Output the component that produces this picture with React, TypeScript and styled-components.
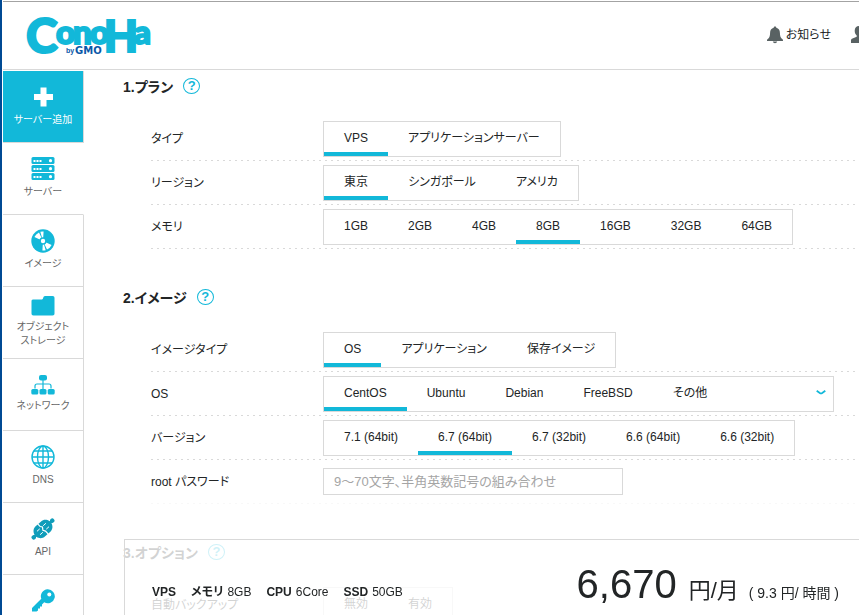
import React, { useState } from "react";
import styled, { createGlobalStyle, css } from "styled-components";

const accent = "#12b8d9";
const line = "#d9d9d9";
const ink = "#222526";

const GlobalStyle = createGlobalStyle`
  *, *::before, *::after { box-sizing: border-box; }
  html, body { margin: 0; background: #fff; }
  body {
    overflow: hidden;
    color: ${ink};
    font-family: "Liberation Sans", "Noto Sans CJK JP", sans-serif;
    font-feature-settings: "palt", "kern";
    font-kerning: normal;
    font-size: 12px;
    line-height: 16px;
  }
  button, input { font: inherit; font-feature-settings: inherit; font-kerning: inherit; color: inherit; }
  button { background: none; border: 0; padding: 0; cursor: pointer; }
  h2, p, dl, dd { margin: 0; }
`;

const Page = styled.div`
  height: 100vh;
  overflow: hidden;
  display: flex;
  flex-direction: column;
  border-left: 2px solid #004a94;
  padding: 1px 0 0 1px;
`;

const Header = styled.header`
  flex: none;
  height: 69px;
  display: flex;
  align-items: center;
  justify-content: space-between;
  padding-left: 22px;
  border-top: 1px solid #a3a3a3;
  border-bottom: 1px solid ${line};
`;

const LogoLink = styled.a`
  display: block;
  line-height: 0;
`;

const HeaderNav = styled.nav`
  display: flex;
  align-items: center;
  gap: 20px;
  margin-right: -8px;
  padding-bottom: 2px;
`;

const HeaderButton = styled.button`
  display: flex;
  align-items: center;
  gap: 3px;
  flex: none;
`;

const Body = styled.div`
  flex: 1;
  min-height: 0;
  display: flex;
`;

const Sidebar = styled.nav`
  flex: none;
  width: 81px;
  padding-top: 1px;
`;

const SideItem = styled.a<{ $look?: "primary" | "open" }>`
  display: flex;
  flex-direction: column;
  align-items: center;
  justify-content: center;
  gap: 4px;
  height: 72px;
  padding-bottom: 2px;
  border-right: 1px solid ${line};
  border-bottom: 1px solid ${line};
  color: #666;
  font-size: 10px;
  line-height: 14px;
  text-align: center;
  text-decoration: none;
  svg { flex: none; }
  ${({ $look }) => $look === "primary" && css`
    background: ${accent};
    color: #fff;
  `}
  ${({ $look }) => $look === "open" && css`border-right-color: transparent;`}
`;

const SideLabel = styled.span`
  min-height: 14px;
  white-space: pre-line;
`;

const Main = styled.main`
  flex: 1;
  min-width: 0;
  padding-left: 39px;
`;

const Section = styled.section`
  margin-bottom: 32px;
`;

const SectionHead = styled.div`
  display: flex;
  align-items: flex-start;
  gap: 10px;
  height: 47px;
  padding-top: 8px;
`;

const SectionTitle = styled.h2`
  font-size: 14px;
  line-height: 18px;
`;

const Help = styled.button`
  width: 17px;
  height: 16px;
  border: 1px solid ${accent};
  border-radius: 50%;
  color: ${accent};
  font-size: 13px;
  font-weight: 700;
  line-height: 14px;
  text-align: center;
`;

const Row = styled.div`
  display: flex;
  align-items: center;
  height: 44px;
  margin-left: 28px;
  background: repeating-linear-gradient(90deg, ${line} 0 2px, transparent 2px 6px) left bottom / 100% 1px no-repeat;
`;

const RowLabel = styled.label`
  flex: none;
  width: 172px;
`;

const TabGroup = styled.div`
  display: flex;
  height: 36px;
  border: 1px solid ${line};
  background: #fff;
`;

const Tab = styled.button<{ $on?: boolean; $menu?: boolean }>`
  display: flex;
  align-items: center;
  padding: 2px 20px 0;
  white-space: nowrap;
  border-bottom: 4px solid ${({ $on }) => ($on ? accent : "transparent")};
  ${({ $menu }) => $menu && css`
    justify-content: space-between;
    min-width: 180px;
    padding-right: 7px;
  `}
`;

const PasswordInput = styled.input`
  width: 300px;
  height: 27px;
  margin: 0 0 1px;
  padding: 0 10px;
  border: 1px solid ${line};
  font-size: 13px;
  &::placeholder { color: #a5a5a5; opacity: 1; }
`;

const SummaryDock = styled.aside`
  position: fixed;
  right: 0;
  bottom: 0;
  left: 84px;
  padding: 39px 0 0 40px;
  background: rgba(255, 255, 255, 0.8);
`;

const Summary = styled.div`
  display: flex;
  justify-content: space-between;
  align-items: flex-start;
  height: 76px;
  padding: 16px 20px 0 27px;
  border: solid ${line};
  border-width: 1px 0 0 1px;
`;

const Specs = styled.dl`
  display: flex;
  gap: 15px;
  padding-top: 28px;
`;

const Spec = styled.div`
  display: flex;
  gap: 4px;
  dt { font-weight: 700; }
`;

const Price = styled.p`
  display: flex;
  align-items: baseline;
  line-height: 56px;
  font-feature-settings: normal;
`;

const Amount = styled.strong`
  font-size: 40px;
  font-weight: 400;
  margin-right: 12px;
`;

const PerMonth = styled.span`
  font-size: 22px;
  margin-right: 10px;
`;

const PerHour = styled.span`
  font-size: 14px;
`;

const LogoSvg = styled.svg`
  overflow: visible;
`;

const Logo = () => (
  <LogoSvg width="128" height="42" viewBox="0 0 128 42" role="img" aria-label="ConoHa by GMO">
    <text y="38" fill={accent} stroke={accent} strokeWidth="2" fontFamily="Lato" fontWeight="900" fontSize="33">
      <tspan fontSize="48" x="1">C</tspan>
      <tspan x="31 48 65" y="29">ono</tspan>
      <tspan fontFamily="Liberation Sans" fontWeight="700" fontSize="47" x="79" y="37">H</tspan>
      <tspan x="109" y="29">a</tspan>
    </text>
    <g fill="#0b58a8" fontWeight="700">
      <text fontFamily="Liberation Sans" fontSize="7" x="41" y="38">by</text>
      <text fontFamily="DejaVu Sans" fontSize="10" x="50" y="39">GMO</text>
    </g>
  </LogoSvg>
);

const BellIcon = () => (
  <svg width="16" height="18" viewBox="0 0 16 18" fill="#596263">
    <path d="M8 0.5c.8 0 1.3.5 1.3 1.3 2.4.6 3.6 2.4 3.6 5 0 3.500.9 5.400 2.600 6.500.5.300.5 1.200.5 1.700H0c0-.5 0-1.400.5-1.700C2.200 12.200 3.100 10.300 3.100 6.800c0-2.600 1.200-4.400 3.600-5C6.700 1 7.200.5 8 .5Z" />
    <path d="M5.800 15.500h4.400c-.3 1.200-1.200 1.700-2.200 1.700s-1.900-.5-2.200-1.700Z" />
  </svg>
);

const UserIcon = () => (
  <svg width="16" height="18" viewBox="0 0 16 18" fill="#596263">
    <path d="M8 0c2.600 0 4.300 1.900 4.300 4.700 0 2-.7 3.700-2 4.800v1.300l4.200 1.600c1 .4 1.500 1 1.500 2V17H0v-2.600c0-1 .5-1.600 1.500-2l4.200-1.600V9.500c-1.300-1.100-2-2.800-2-4.800C3.700 1.900 5.400 0 8 0Z" />
  </svg>
);

const PlusIcon = () => (
  <svg width="24" height="24" viewBox="0 0 24 24" fill="#fff">
    <path d="M9.500 2.500h6V9h6.500v6h-6.500v6.500h-6V15H3V9h6.500Z" />
  </svg>
);

const ServerIcon = () => (
  <svg width="24" height="24" viewBox="0 0 24 24">
    {[0, 8, 16].map((y) => (
      <g key={y}>
        <rect x="0.500" y={y} width="23" height="7" rx="1.500" fill={accent} />
        <path d={`M2.500 ${y + 3}h2v2h-2zM5.500 ${y + 3}h2v2h-2zM8.500 ${y + 3}h2v2h-2z`} fill="#fff" />
        <circle cx="19.500" cy={y + 3.700} r="1.600" fill="#fff" />
      </g>
    ))}
  </svg>
);

const DiscIcon = () => (
  <svg width="24" height="24" viewBox="0 0 24 24">
    <circle cx="12" cy="12" r="11.700" fill={accent} />
    <path d="M12 12 3.400 8A9.500 9.500 0 0 1 8 3.400ZM12 12 9.300 2.800A9.500 9.500 0 0 1 12.600 2.500ZM12 12 20.600 16A9.500 9.500 0 0 1 16 20.600ZM12 12 14.700 21.200A9.500 9.500 0 0 1 11.400 21.500Z" fill="#fff" />
    <circle cx="12" cy="12" r="3.700" fill={accent} />
    <circle cx="12" cy="12" r="2.200" fill="#fff" />
  </svg>
);

const FolderIcon = () => (
  <svg width="24" height="20" viewBox="0 0 24 20" fill={accent}>
    <path d="M2 3.500h9c1.300 0 1-3.500 3-3.500h7.500c1.500 0 2 .7 2 2v15.500c0 1.200-.6 2-2 2h-19c-1.300 0-2-.7-2-2V5.500c0-1.300.3-2 1.500-2Z" />
  </svg>
);

const NetworkIcon = () => (
  <svg width="24" height="20" viewBox="0 0 24 20" fill={accent}>
    <rect x="8" width="8" height="5.500" rx="2" />
    <path d="M12 5v9M4 13.500V11q0-2 2-2h12q2 0 2 2v2.500" fill="none" stroke={accent} strokeWidth="1.200" />
    <rect x="0.300" y="14" width="7" height="5.500" rx="1.500" />
    <rect x="8.500" y="14" width="7" height="5.500" rx="1.500" />
    <rect x="16.700" y="14" width="7" height="5.500" rx="1.500" />
  </svg>
);

const GlobeIcon = () => (
  <svg width="24" height="24" viewBox="0 0 24 24" fill="none" stroke={accent} strokeWidth="1.400">
    <circle cx="12" cy="12" r="11" />
    <ellipse cx="12" cy="12" rx="5.500" ry="11" />
    <path d="M12 1v22M1 12h22M3 6h18M3 18h18" />
  </svg>
);

const PlugIcon = () => (
  <svg width="24" height="24" viewBox="-1 -1 26 26">
    <g transform="rotate(-42 12 12)">
      <path d="M-2 10.500h3C2 6.500 5 4.500 8 4.500h8c3 0 6 2 7 6h3v3h-3c-1 4-4 6-7 6H8c-3 0-6-2-7-6h-3Z" fill="#109dba" />
      <circle cx="-1.500" cy="12" r="2.400" fill="#109dba" />
      <circle cx="25.500" cy="12" r="2.400" fill="#109dba" />
      <path d="M11.500 4v4l1.500 2-2 3 1.500 2.500V20" fill="none" stroke="#fff" strokeWidth="1.300" />
      <path d="M5.500 9.500h4M5.500 14.500h4M14.500 9.500h4M14.500 14.500h4" fill="none" stroke="#fff" strokeWidth="1" />
    </g>
  </svg>
);

const KeyIcon = () => (
  <svg width="24" height="24" viewBox="0 0 24 24">
    <path d="M16.500.3a7 7 0 1 1-3.300 13L11 15.500v2H9v2H7v2l-1.500 1H1V19l9.300-9.200A7 7 0 0 1 16.500.3Z" fill={accent} />
    <circle cx="18.300" cy="5.500" r="2" fill="#fff" />
  </svg>
);

const ChevronIcon = () => (
  <svg width="10" height="6" viewBox="0 0 10 6" fill="none" stroke={accent} strokeWidth="1.800">
    <path d="M0.700 0.800 3.800 3Q5 3.800 6.200 3L9.300 0.800" />
  </svg>
);

type Choice = { id: string; label: string; options: string[]; initial: number; menu?: boolean };

const plan: Choice[] = [
  { id: "type", label: "タイプ", options: ["VPS", "アプリケーションサーバー"], initial: 0 },
  { id: "region", label: "リージョン", options: ["東京", "シンガポール", "アメリカ"], initial: 0 },
  { id: "memory", label: "メモリ", options: ["1GB", "2GB", "4GB", "8GB", "16GB", "32GB", "64GB"], initial: 3 },
];

const image: Choice[] = [
  { id: "image-type", label: "イメージタイプ", options: ["OS", "アプリケーション", "保存イメージ"], initial: 0 },
  { id: "os", label: "OS", options: ["CentOS", "Ubuntu", "Debian", "FreeBSD", "その他"], initial: 0, menu: true },
  {
    id: "version",
    label: "バージョン",
    options: ["7.1 (64bit)", "6.7 (64bit)", "6.7 (32bit)", "6.6 (64bit)", "6.6 (32bit)"],
    initial: 1,
  },
];

const option: Choice[] = [
  { id: "backup", label: "自動バックアップ", options: ["無効", "有効"], initial: -1 },
];

const ChoiceRow = ({ id, label, options, initial, menu }: Choice) => {
  const [selected, setSelected] = useState(initial);
  return (
    <Row>
      <RowLabel as="span" id={id}>{label}</RowLabel>
      <TabGroup role="group" aria-labelledby={id}>
        {options.map((text, i) => {
          const isMenu = menu && i === options.length - 1;
          return (
            <Tab
              key={text}
              type="button"
              $on={i === selected}
              $menu={isMenu}
              aria-pressed={i === selected}
              onClick={() => setSelected(i)}
            >
              {text}
              {isMenu && <ChevronIcon />}
            </Tab>
          );
        })}
      </TabGroup>
    </Row>
  );
};

const FormSection = ({ title, rows, children }: { title: string; rows: Choice[]; children?: React.ReactNode }) => (
  <Section>
    <SectionHead>
      <SectionTitle>{title}</SectionTitle>
      <Help type="button">?</Help>
    </SectionHead>
    {rows.map((row) => <ChoiceRow key={row.id} {...row} />)}
    {children}
  </Section>
);

const specs = [["VPS", ""], ["メモリ", "8GB"], ["CPU", "6Core"], ["SSD", "50GB"]];

export default function App() {
  return (
    <>
      <GlobalStyle />
      <Page>
        <Header>
          <LogoLink href="#"><Logo /></LogoLink>
          <HeaderNav>
            <HeaderButton type="button"><BellIcon />お知らせ</HeaderButton>
            <HeaderButton type="button" aria-label="アカウント"><UserIcon /></HeaderButton>
          </HeaderNav>
        </Header>
        <Body>
          <Sidebar>
            <SideItem href="#add" $look="primary"><PlusIcon /><SideLabel>サーバー追加</SideLabel></SideItem>
            <SideItem href="#server" $look="open"><ServerIcon /><SideLabel>サーバー</SideLabel></SideItem>
            <SideItem href="#image"><DiscIcon /><SideLabel>イメージ</SideLabel></SideItem>
            <SideItem href="#storage"><FolderIcon /><SideLabel>{"オブジェクト\nストレージ"}</SideLabel></SideItem>
            <SideItem href="#network"><NetworkIcon /><SideLabel>ネットワーク</SideLabel></SideItem>
            <SideItem href="#dns"><GlobeIcon /><SideLabel>DNS</SideLabel></SideItem>
            <SideItem href="#api"><PlugIcon /><SideLabel>API</SideLabel></SideItem>
            <SideItem href="#key" aria-label="SSH Key"><KeyIcon /><SideLabel /></SideItem>
          </Sidebar>
          <Main>
            <FormSection title="1.プラン" rows={plan} />
            <FormSection title="2.イメージ" rows={image}>
              <Row>
                <RowLabel htmlFor="root-password">root パスワード</RowLabel>
                <PasswordInput id="root-password" type="password" placeholder="9〜70文字、半角英数記号の組み合わせ" />
              </Row>
            </FormSection>
            <FormSection title="3.オプション" rows={option} />
          </Main>
        </Body>
        <SummaryDock>
          <Summary>
            <Specs>
              {specs.map(([name, value]) => (
                <Spec key={name}>
                  <dt>{name}</dt>
                  {value && <dd>{value}</dd>}
                </Spec>
              ))}
            </Specs>
            <Price>
              <Amount>6,670</Amount>
              <PerMonth>円/月</PerMonth>
              <PerHour>( 9.3 円/ 時間 )</PerHour>
            </Price>
          </Summary>
        </SummaryDock>
      </Page>
    </>
  );
}
